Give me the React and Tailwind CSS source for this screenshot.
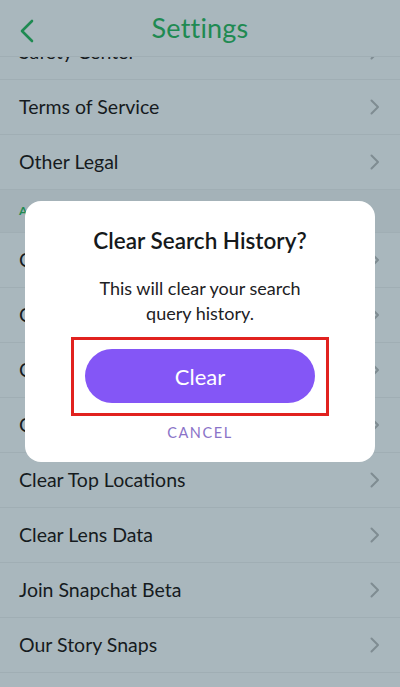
import React from "react";

const font = { fontFamily: "Lato, 'Open Sans', sans-serif" };

const topRows = ["Safety Center", "Terms of Service", "Other Legal"];

const advancedRows = [
  "Clear Cache",
  "Clear Conversations",
  "Clear Browser Data",
  "Clear Search History",
  "Clear Top Locations",
  "Clear Lens Data",
  "Join Snapchat Beta",
  "Our Story Snaps",
];

const Chevron = () => (
  <svg width="12" height="18" viewBox="0 0 12 18" fill="none">
    <path
      d="M2.5 2.5L9 9l-6.5 6.5"
      stroke="#7f8c92"
      strokeWidth="2"
      strokeLinecap="round"
      strokeLinejoin="round"
    />
  </svg>
);

const Row = ({ label }) => (
  <div className="h-[55px] flex items-center justify-between pl-[19px] pr-[19px] border-b border-[#a0aeb4]">
    <span className="text-[19.5px] text-[#161b1e]">{label}</span>
    <Chevron />
  </div>
);

export default function App() {
  return (
    <div
      className="relative w-[400px] h-[687px] overflow-hidden bg-[#a9b7bd]"
      style={font}
    >
      {/* header */}
      <div className="relative z-10 h-[57px] bg-[#a9b7bd] flex items-center justify-center border-b border-[#a0aeb4]">
        <svg
          className="absolute left-[18px] top-[18px]"
          width="18"
          height="26"
          viewBox="0 0 18 26"
          fill="none"
        >
          <path
            d="M14 3L4 13l10 10"
            stroke="#1f8a52"
            strokeWidth="2.6"
            strokeLinecap="round"
            strokeLinejoin="round"
          />
        </svg>
        <span className="text-[27px] text-[#1f8a52] tracking-[0.2px]">Settings</span>
      </div>

      {/* settings list, scrolled partway */}
      <div className="-mt-[32px]">
        {topRows.map((r) => (
          <Row key={r} label={r} />
        ))}
        <div className="h-[43px] bg-[#a4b2b8] flex items-center pl-[19px] border-b border-[#a0aeb4]">
          <span className="text-[12px] font-bold tracking-[1px] text-[#1f8a52]">ADVANCED</span>
        </div>
        {advancedRows.map((r) => (
          <Row key={r} label={r} />
        ))}
        <div className="h-[55px]" />
      </div>

      {/* dialog */}
      <div className="absolute left-[25px] top-[201px] w-[350px] h-[261px] bg-white rounded-[16px] flex flex-col items-center">
        <div className="mt-[23px] text-[22.5px] font-semibold text-[#15191b]">Clear Search History?</div>
        <div className="mt-[18px] text-[18px] leading-[25px] text-[#1d2124] text-center">
          This will clear your search
          <br />
          query history.
        </div>
        <div className="mt-[11px] w-[258px] h-[79px] border-[3px] border-[#e1221f] flex items-center justify-center">
          <button className="w-[230px] h-[54px] rounded-full bg-[#8456f6] text-white text-[22px]">
            Clear
          </button>
        </div>
        <div className="mt-[6px] text-[14.5px] tracking-[1.6px] text-[#8a73c8]">CANCEL</div>
      </div>
    </div>
  );
}
